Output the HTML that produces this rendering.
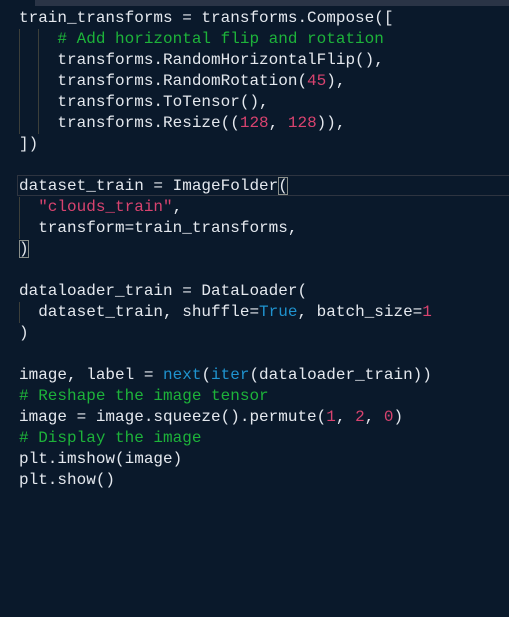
<!DOCTYPE html><html><head><style>
body{margin:0;width:509px;height:617px;background:#0a192b;overflow:hidden;position:relative}
.bar{position:absolute;left:35px;top:0;width:474px;height:6px;background:#2a3446}
pre{position:absolute;left:19px;top:8px;margin:0;font:16px/21px "Liberation Mono",monospace;color:#e4e8ee;white-space:pre}
.c{color:#1db33a}.n{color:#d8436f}.b{color:#1f93cf}.s{color:#d8436f}
.hl{position:absolute;left:17px;top:175px;width:492px;height:21px;border:1px solid #2e3440;border-right:none;box-sizing:border-box}
.g{position:absolute;width:1px;background:#3c3f3a}
.bx{outline:1px solid #8a8f8a;outline-offset:-1px}
</style></head><body>
<div class="bar"></div>
<div class="hl"></div>
<div class="g" style="left:19px;top:29px;height:105px"></div>
<div class="g" style="left:38px;top:29px;height:105px"></div>
<div class="g" style="left:19px;top:197px;height:42px"></div>
<div class="g" style="left:19px;top:302px;height:21px"></div>
<pre>train_transforms = transforms.Compose([
    <span class="c"># Add horizontal flip and rotation</span>
    transforms.RandomHorizontalFlip(),
    transforms.RandomRotation(<span class="n">45</span>),
    transforms.ToTensor(),
    transforms.Resize((<span class="n">128</span>, <span class="n">128</span>)),
])

dataset_train = ImageFolder<span class="bx">(</span>
  <span class="s">"clouds_train"</span>,
  transform=train_transforms,
<span class="bx">)</span>

dataloader_train = DataLoader(
  dataset_train, shuffle=<span class="b">True</span>, batch_size=<span class="n">1</span>
)

image, label = <span class="b">next</span>(<span class="b">iter</span>(dataloader_train))
<span class="c"># Reshape the image tensor</span>
image = image.squeeze().permute(<span class="n">1</span>, <span class="n">2</span>, <span class="n">0</span>)
<span class="c"># Display the image</span>
plt.imshow(image)
plt.show()</pre>
</body></html>
